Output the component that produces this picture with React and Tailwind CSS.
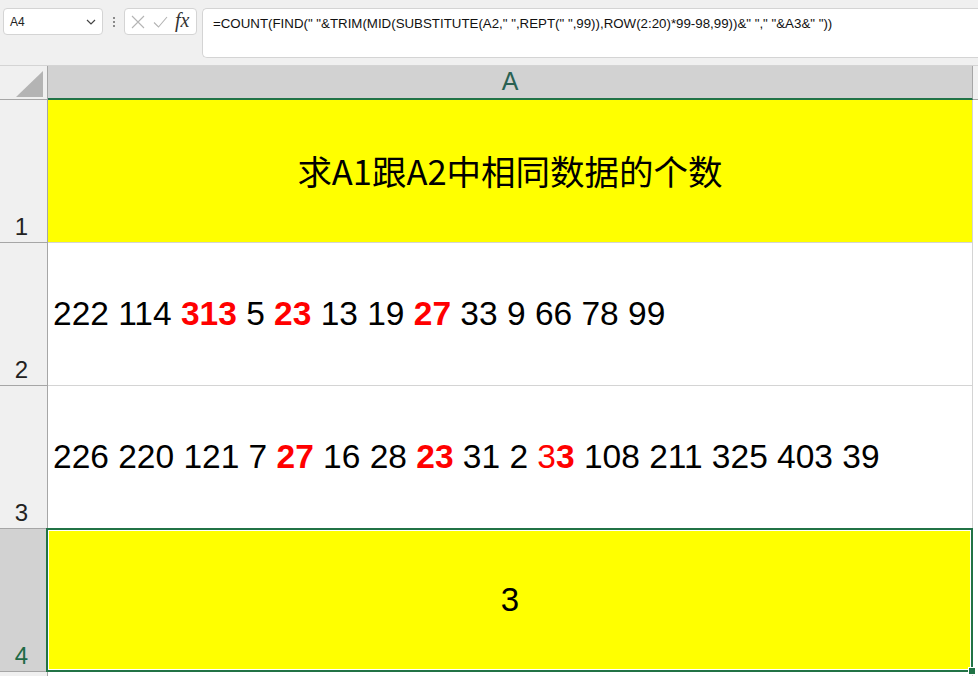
import React from 'react';

const R = ({ children, b }) => (
  <span className={`text-[#ff0000] ${b === false ? 'font-normal' : 'font-bold'}`}>{children}</span>
);

const RowHead = ({ n, active }) => (
  <div
    className={`w-[48px] shrink-0 border-r border-b border-[#a6a6a6] flex items-end justify-center pb-[3px] text-[24px] leading-none ${
      active ? 'bg-[#d2d2d2] text-[#1f6a46]' : 'bg-[#f0f0f0] text-[#222]'
    }`}
  >
    <span className="-ml-[4px]">{n}</span>
  </div>
);

export default function App() {
  return (
    <div
      className="w-[978px] h-[676px] overflow-hidden bg-[#f0f0f0] flex flex-col"
      style={{ fontFamily: '"Liberation Sans", "Noto Sans CJK SC", sans-serif' }}
    >
      {/* formula bar */}
      <div className="h-[65px] shrink-0 flex items-start pt-[8px] pl-[3px]">
        <div className="w-[100px] h-[27px] bg-white border border-[#d4d4d4] rounded-[4px] flex items-center justify-between pl-[6px] pr-[6px]">
          <span className="text-[12px] text-[#222]">A4</span>
          <svg width="10" height="6" viewBox="0 0 10 6" className="text-[#444]">
            <path d="M1 1l4 4 4-4" fill="none" stroke="currentColor" strokeWidth="1.2" />
          </svg>
        </div>
        <div className="w-[21px] h-[27px] flex flex-col items-center justify-center gap-[2px]">
          <span className="w-[2px] h-[2px] bg-[#8a8a8a]" />
          <span className="w-[2px] h-[2px] bg-[#8a8a8a]" />
          <span className="w-[2px] h-[2px] bg-[#8a8a8a]" />
        </div>
        <div className="w-[73px] h-[27px] bg-white border border-[#d4d4d4] rounded-[4px] flex items-center pl-[6px] gap-[8px]">
          <svg width="14" height="14" viewBox="0 0 14 14">
            <path d="M1 1l12 12M13 1L1 13" stroke="#b4b4b4" strokeWidth="1.1" fill="none" />
          </svg>
          <svg width="15" height="12" viewBox="0 0 15 12">
            <path d="M1 6.5l4.5 4.5L14 1" stroke="#b4b4b4" strokeWidth="1.1" fill="none" />
          </svg>
          <span
            className="italic text-[20px] leading-none text-[#333] -mt-[3px] -ml-[1px]"
            style={{ fontFamily: '"Liberation Serif", serif' }}
          >
            fx
          </span>
        </div>
        <div className="ml-[5px] flex-1 h-[50px] bg-white border border-r-0 border-[#d4d4d4] rounded-l-[5px] pl-[10px] pt-[7px] text-[13.3px] leading-[15px] text-[#111] whitespace-pre">
          {'=COUNT(FIND(" "&TRIM(MID(SUBSTITUTE(A2," ",REPT(" ",99)),ROW(2:20)*99-98,99))&" "," "&A3&" "))'}
        </div>
      </div>

      {/* column header */}
      <div className="h-[35px] shrink-0 flex border-t border-[#d4d4d4]">
        <div className="w-[48px] shrink-0 border-r border-b border-[#a6a6a6] bg-[#f0f0f0] flex items-end justify-end pr-[4px] pb-[2px]">
          <svg width="27" height="26" viewBox="0 0 27 26">
            <polygon points="0,26 27,0 27,26" fill="#b4b4b4" />
          </svg>
        </div>
        <div className="w-[925px] shrink-0 bg-[#d2d2d2] border-r border-[#a6a6a6] border-b-2 border-b-[#217346] flex items-end justify-center pb-[4px] text-[25px] leading-none text-[#2a6152]">
          A
        </div>
        <div className="flex-1 border-b border-[#a6a6a6]" />
      </div>

      {/* rows */}
      <div className="flex-1 bg-white flex flex-col">
        <div className="h-[143px] shrink-0 flex">
          <RowHead n="1" />
          <div
            className="w-[925px] shrink-0 bg-[#ffff00] border-r border-b border-[#d4d4d4] flex items-center justify-center text-[34.5px] text-black"
            style={{ fontFamily: '"Noto Sans CJK SC", "Liberation Sans", sans-serif' }}
          >
            求A1跟A2中相同数据的个数
          </div>
        </div>

        <div className="h-[143px] shrink-0 flex">
          <RowHead n="2" />
          <div className="w-[925px] shrink-0 border-r border-b border-[#d4d4d4] flex items-center pl-[5px] text-[33.5px] text-black whitespace-pre">
            222 114 <R>313</R> 5 <R>23</R> 13 19 <R>27</R> 33 9 66 78 99
          </div>
        </div>

        <div className="h-[143px] shrink-0 flex">
          <RowHead n="3" />
          <div className="w-[925px] shrink-0 border-r border-b border-[#d4d4d4] flex items-center pl-[5px] text-[33.5px] text-black whitespace-pre">
            226 220 121 7 <R>27</R> 16 28 <R>23</R> 31 2 <R b={false}>3</R><R>3</R> 108 211 325 403 39
          </div>
        </div>

        <div className="h-[143px] shrink-0 flex">
          <RowHead n="4" active />
          <div className="relative w-[925px] shrink-0 bg-[#ffff00] border-r border-b border-[#d4d4d4] flex items-center justify-center text-[33px] text-black">
            3
            <div className="absolute -left-[2px] -top-[1px] -right-[1px] -bottom-[1px] border-2 border-[#217346]">
              <div className="w-full h-full border border-white" />
            </div>
            <div className="absolute -right-[4px] -bottom-[4px] w-[8px] h-[8px] bg-[#217346] border border-white" />
          </div>
        </div>

        <div className="flex-1 flex">
          <div className="w-[48px] shrink-0 border-r border-[#a6a6a6] bg-[#f0f0f0]" />
          <div className="w-[925px] shrink-0 border-r border-[#d4d4d4]" />
        </div>
      </div>
    </div>
  );
}
